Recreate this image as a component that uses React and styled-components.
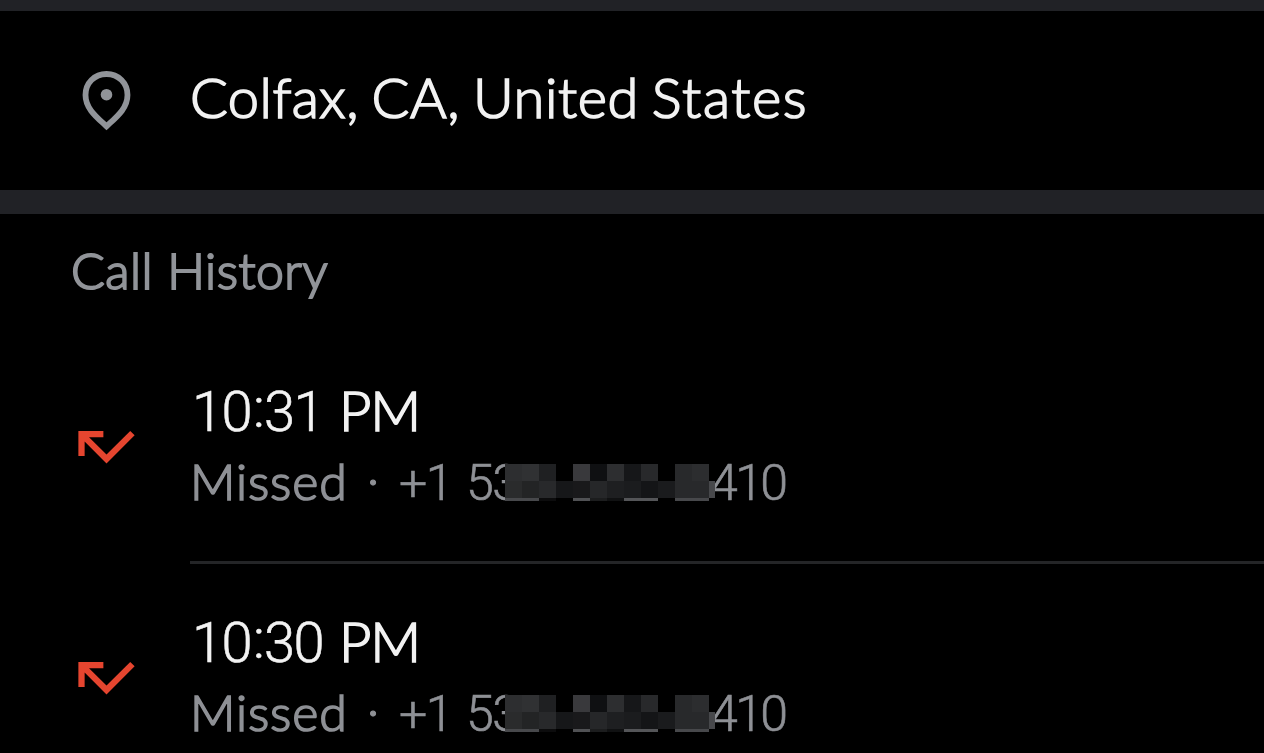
import styled, { createGlobalStyle } from 'styled-components';

const calls = [
  { id: 1, hour: '10', minute: '31', period: 'PM' },
  { id: 2, hour: '10', minute: '30', period: 'PM' },
];

// Shades of the censored digits, left to right
const mosaicRows = [
  ['#2d2e30', '#303133', '#1f2022', '#000', '#39393c', '#0f1012', '#2d2e30', '#161719', '#28292b', '#000', '#28292b', '#2c2d2f', 'transparent'],
  ['#2a2b2c', '#232425', '#28292b', '#161719', '#19191b', '#262729', '#1e1f21', '#1b1c1e', '#141517', '#1a1b1d', '#28292b', '#28292b', '#47484b'],
  ['#47484b', '#47484b', '#0c0c0d', '#000', '#505154', '#1c1d1e', '#101112', '#545558', '#545558', '#000', '#47484b', '#47484b', 'transparent'],
];

function Mosaic() {
  return (
    <MosaicGrid aria-hidden="true">
      {mosaicRows.map((row, y) => row.map((color, x) => (
        <Cell key={`${y}-${x}`} $color={color} />
      )))}
    </MosaicGrid>
  );
}

function CallRow({ hour, minute, period, last }) {
  return (
    <Call>
      <MissedIcon viewBox="0 0 24 24" aria-hidden="true">
        <path d="M19.59 7L12 14.59 6.41 9H11V7H3v8h2v-4.59l7 7 9-9z" fill="#e5452f" />
      </MissedIcon>
      <CallBody $last={last}>
        <Time><Digits $width={143}>{hour}<Colon>:</Colon>{minute}</Digits><Period>{period}</Period></Time>
        <Details>
          <Status>Missed</Status>
          <Dot>·</Dot>
          <Digits $width={67}>+1</Digits>
          <Digits $width={39}>53</Digits>
          <Mosaic />
          <Digits $tight>410</Digits>
        </Details>
      </CallBody>
    </Call>
  );
}

function App() {
  return (
    <Page>
      <Location>
        <PinIcon viewBox="0 0 48 60" fill="none" aria-hidden="true">
          <path d="M24 3C12 3 3 12.2 3 24C3 37.5 14 46 24 55.3C34 46 45 37.5 45 24C45 12.2 36 3 24 3Z" stroke="#919499" strokeWidth="5.8" />
          <circle cx="24" cy="23.7" r="5.8" fill="#919499" />
        </PinIcon>
        <LocationText>
          <Word $spacing={0.5}>Colfax, </Word>
          <Word $spacing={0.6}>CA, </Word>
          <Word $spacing={0.6}>United </Word>
          <Word $spacing={1.6}>States</Word>
        </LocationText>
      </Location>
      <History>
        <Heading>Call History</Heading>
        {calls.map((call, i) => (
          <CallRow key={call.id} {...call} last={i === calls.length - 1} />
        ))}
      </History>
    </Page>
  );
}

const GlobalStyle = createGlobalStyle`
  body {
    margin: 0;
    background: #000;
    overflow: hidden;
  }
`;
const Screen = styled.main`
  box-sizing: border-box;
  width: 100%;
  height: 753px;
  overflow: hidden;
  background: #000;
  color: #f2f2f2;
  font-family: Lato, sans-serif;
  font-weight: 300;
  -webkit-text-stroke: 1.7px currentColor;
  white-space: nowrap;
`;
function Page({ children }) {
  return (
    <Screen>
      <GlobalStyle />
      {children}
    </Screen>
  );
}
const Location = styled.section`
  box-sizing: border-box;
  display: flex;
  height: 214px;
  padding: 60px 0 0 82px;
  border-top: 11px solid #212226;
  border-bottom: 24px solid #212226;
`;
const PinIcon = styled.svg`
  width: 49px;
  height: 60px;
  margin-right: 59px;
`;
const LocationText = styled.p`
  margin: -4px 0 0;
  font-size: 56px;
  line-height: 60px;
  word-spacing: -3px;
`;
const Word = styled.span`
  letter-spacing: ${props => props.$spacing}px;
`;
const History = styled.section`
  padding-top: 27px;
`;
const Heading = styled.h2`
  margin: -1px 0 26px 71px;
  color: #919499;
  -webkit-text-stroke: 2px #919499;
  font-size: 50px;
  font-weight: 300;
  line-height: 60px;
  letter-spacing: 0.5px;
`;
const Call = styled.div`
  display: flex;
  height: 231px;
`;
const MissedIcon = styled.svg`
  flex: none;
  width: 75px;
  height: 75px;
  margin: 83px 46px 0 69px;
`;
const CallBody = styled.div`
  box-sizing: border-box;
  flex: 1;
  height: 238px;
  padding-top: 54px;
  border-bottom: ${props => props.$last ? 'none' : '3px solid #242527'};
`;
const Time = styled.div`
  display: flex;
  height: 72px;
  padding-left: 2px;
  font-size: 56px;
  line-height: 64px;
`;
const Digits = styled.span`
  flex: none;
  width: ${props => props.$width ? `${props.$width}px` : 'auto'};
  font-family: Roboto, sans-serif;
  font-weight: 300;
  letter-spacing: ${props => props.$tight ? '-2.6px' : '-1.6px'};
  -webkit-text-stroke-width: 0.6px;
`;
const Colon = styled.span`
  position: relative;
  top: -4px;
  margin: 0 1px 0 2px;
`;
const Period = styled.span`
  margin: -2px 0 0 4px;
  letter-spacing: -1px;
`;
const Details = styled.div`
  display: flex;
  color: #8e9095;
  -webkit-text-stroke-color: #8e9095;
  font-size: 50px;
  line-height: 62px;
`;
const Status = styled.span`
  width: 177px;
  margin-top: -2px;
  letter-spacing: 0.9px;
`;
const Dot = styled.span`
  width: 32px;
  margin-top: -5px;
  -webkit-text-stroke-width: 1px;
`;
const MosaicGrid = styled.div`
  position: relative;
  display: grid;
  grid-template-columns: repeat(12, 17px) 6px;
  grid-template-rows: 17px 17px 3px;
  align-self: flex-start;
  margin: 12px -5px 0 0;
`;
const Cell = styled.span`
  background: ${props => props.$color};
`;

export default App;
